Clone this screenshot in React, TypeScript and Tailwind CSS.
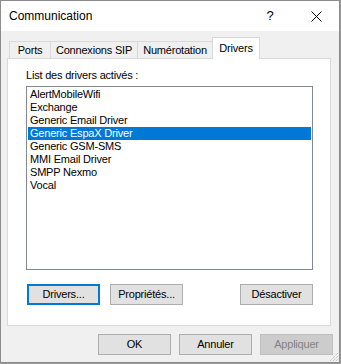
import React from "react";

const items = [
  "AlertMobileWifi",
  "Exchange",
  "Generic Email Driver",
  "Generic EspaX Driver",
  "Generic GSM-SMS",
  "MMI Email Driver",
  "SMPP Nexmo",
  "Vocal",
];

const font = { fontFamily: '"Liberation Sans", Arial, sans-serif' };

function Btn({
  children,
  focused,
  disabled,
}: {
  children: React.ReactNode;
  focused?: boolean;
  disabled?: boolean;
}) {
  const cls = focused
    ? "border-2 border-[#0078d7] bg-[#e1e1e1] text-black"
    : disabled
    ? "border border-[#bfbfbf] bg-[#cccccc] text-[#838383]"
    : "border border-[#adadad] bg-[#e1e1e1] text-black";
  return (
    <div
      className={`w-[73px] h-[21px] flex items-center justify-center text-[11px] tracking-[-0.2px] shrink-0 ${cls}`}
    >
      {children}
    </div>
  );
}

export default function App() {
  const tabs = [
    { label: "Ports", w: "w-[42px]" },
    { label: "Connexions SIP", w: "w-[88px]" },
    { label: "Numérotation", w: "w-[76px]" },
  ];
  return (
    <div className="w-[341px] h-[364px] bg-[#9a9a9a]" style={font}>
      <div className="relative w-[340px] h-[363px] border border-[#8c8c8c] bg-[#f0f0f0] flex flex-col">
        {/* Title bar */}
        <div className="h-[30px] bg-white flex items-center shrink-0">
          <div className="pl-[8px] text-[12px] text-black flex-1">Communication</div>
          <div className="w-[46px] h-[30px] flex items-center justify-center text-[13px] text-black">?</div>
          <div className="w-[46px] h-[30px] flex items-center justify-center">
            <svg width="11" height="11" viewBox="0 0 11 11">
              <path d="M0.5 0.5 L10.5 10.5 M10.5 0.5 L0.5 10.5" stroke="#000" strokeWidth="1" />
            </svg>
          </div>
        </div>
        {/* Body */}
        <div className="flex-1 pl-[6px] pt-[6px] flex flex-col">
          {/* Tab strip */}
          <div className="flex items-end h-[21px] pl-[2px] text-[11px] tracking-[-0.2px] text-black">
            {tabs.map((t, i) => (
              <div
                key={t.label}
                className={`${t.w} h-[17px] border-t border-l border-r border-[#d9d9d9] bg-[#f0f0f0] flex items-center justify-center ${
                  i > 0 ? "-ml-px" : ""
                }`}
              >
                {t.label}
              </div>
            ))}
            <div className="relative z-10 -ml-px -mb-px w-[48px] h-[22px] border-t border-l border-r border-[#d9d9d9] bg-white flex justify-center pt-[2px]">
              Drivers
            </div>
          </div>
          {/* Panel */}
          <div className="w-[324px] h-[268px] border border-[#d9d9d9] bg-white flex flex-col">
            <div className="pt-[10px] pl-[18px] text-[11px] leading-[13px] tracking-[-0.2px] text-black">
              List des drivers activés :
            </div>
            <div className="mt-[4px] ml-[18px] w-[287px] h-[184px] border border-[#828790] p-px bg-white">
              {items.map((it) => (
                <div
                  key={it}
                  className={`h-[13px] leading-[13px] pl-[2px] text-[11px] tracking-[-0.2px] ${
                    it === "Generic EspaX Driver" ? "bg-[#0078d7] text-white" : "text-black"
                  }`}
                >
                  {it}
                </div>
              ))}
            </div>
            <div className="mt-[14px] pl-[19px] pr-[17px] flex">
              <Btn focused>Drivers...</Btn>
              <div className="ml-[10px]">
                <Btn>Propriétés...</Btn>
              </div>
              <div className="ml-auto">
                <Btn>Désactiver</Btn>
              </div>
            </div>
          </div>
          {/* Bottom buttons */}
          <div className="mt-[8px] pr-[6px] flex justify-end gap-2">
            <Btn>OK</Btn>
            <Btn>Annuler</Btn>
            <Btn disabled>Appliquer</Btn>
          </div>
        </div>
        {/* Resize grip */}
        <svg className="absolute right-0 bottom-0" width="12" height="12" viewBox="0 0 12 12">
          <path d="M11 3 L3 11 M11 6 L6 11 M11 9 L9 11" stroke="#b0b0b0" strokeWidth="1" strokeDasharray="1 1" />
        </svg>
      </div>
    </div>
  );
}
